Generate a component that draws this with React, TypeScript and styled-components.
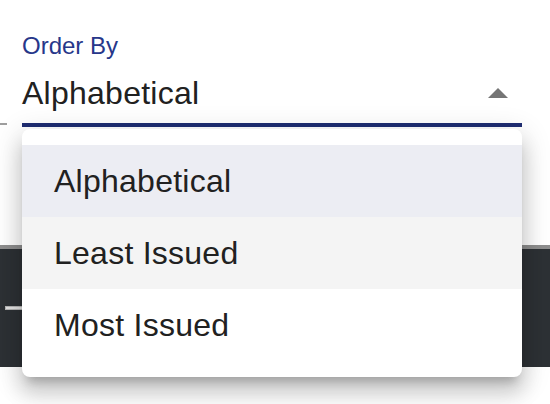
import React from "react";
import styled, { createGlobalStyle } from "styled-components";

const options = ["Alphabetical", "Least Issued", "Most Issued"];

const GlobalStyle = createGlobalStyle`
  body {
    margin: 0;
    background: #fff;
    font-family: "Liberation Sans", Arial, sans-serif;
  }
`;

export default function App() {
  const selected = 0;
  const hovered = 1;

  return (
    <Page>
      <GlobalStyle />
      <FieldRow>
        <Stub />
        <Field>
          <Label>Order By</Label>
          <SelectRow>
            <Value>{options[selected]}</Value>
            <Arrow viewBox="0 0 24 24">
              <path d="M7 14l5-5 5 5z" />
            </Arrow>
          </SelectRow>
          <Underline />
        </Field>
      </FieldRow>
      <Toolbar>
        <Track />
      </Toolbar>
      <Menu>
        {options.map((o, i) => (
          <Item key={o} $selected={i === selected} $hover={i === hovered}>
            {o}
          </Item>
        ))}
      </Menu>
    </Page>
  );
}

const Page = styled.div`
  position: relative;
  width: 550px;
  height: 404px;
  overflow: hidden;
`;

const FieldRow = styled.div`
  display: flex;
  align-items: flex-end;
  padding-top: 34px;
`;

const Stub = styled.div`
  width: 7px;
  height: 2px;
  margin-bottom: 2px;
  background: #9e9e9e;
`;

const Field = styled.div`
  display: flex;
  flex-direction: column;
  width: 500px;
  margin-left: 15px;
`;

const Label = styled.div`
  font-size: 24px;
  line-height: 24px;
  color: #27378a;
`;

const SelectRow = styled.div`
  display: flex;
  align-items: center;
  justify-content: space-between;
  height: 46px;
  margin-top: 12px;
`;

const Value = styled.div`
  font-size: 32px;
  line-height: 46px;
  letter-spacing: 0.25px;
  color: #212121;
`;

const Arrow = styled.svg`
  width: 48px;
  height: 48px;
  margin-top: 2px;
  fill: #757575;
`;

const Underline = styled.div`
  height: 4px;
  margin-top: 7px;
  background: #1f2d72;
`;

const Toolbar = styled.div`
  display: flex;
  align-items: center;
  margin-top: 118px;
  height: 118px;
  padding-left: 5px;
  background: #2d3135;
  border-top: 4px solid #8e8e8e;
`;

const Track = styled.div`
  width: 40px;
  height: 2px;
  background: #e4e4e4;
  border: 1px solid #b5b5b5;
`;

const Menu = styled.ul`
  position: absolute;
  top: 129px;
  left: 22px;
  width: 500px;
  margin: 0;
  padding: 16px 0;
  list-style: none;
  background: #fff;
  border-radius: 8px;
  box-shadow: 0 10px 10px -6px rgba(0, 0, 0, 0.2),
    0 16px 20px 2px rgba(0, 0, 0, 0.14), 0 6px 28px 4px rgba(0, 0, 0, 0.12);
`;

const Item = styled.li<{ $selected?: boolean; $hover?: boolean }>`
  padding: 12px 32px;
  font-size: 32px;
  line-height: 48px;
  letter-spacing: 0.25px;
  color: #212121;
  background: ${(p) =>
    p.$selected ? "#ecedf3" : p.$hover ? "#f4f4f4" : "transparent"};
`;
